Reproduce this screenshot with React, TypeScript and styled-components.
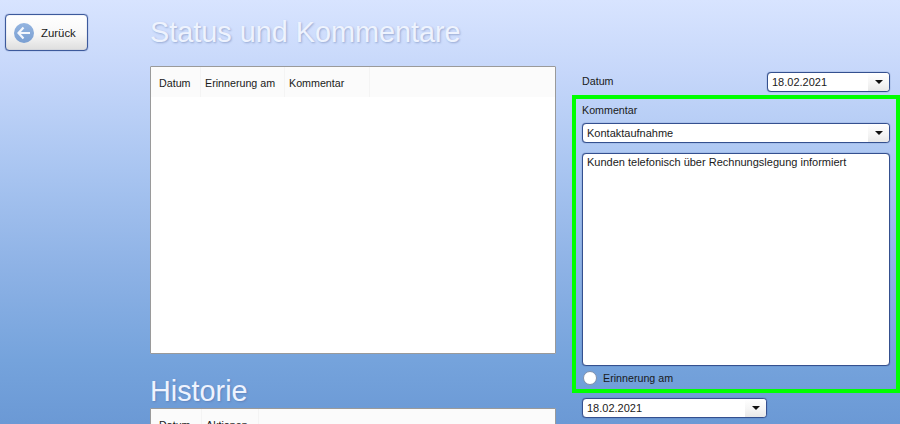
import styled, { createGlobalStyle } from "styled-components";

const GlobalStyle = createGlobalStyle`
  html, body {
    margin: 0;
    padding: 0;
  }
  body {
    font-family: "Liberation Sans", Arial, sans-serif;
    font-size: 10.7px;
    color: #1a1a1a;
  }
`;

const ScPage = styled.div`
  display: flex;
  width: 900px;
  height: 424px;
  overflow: hidden;
  background: linear-gradient(180deg, #d8e4ff 0%, #c6d7fa 17%, #a9c5f1 40%, #8fb3e6 62%, #75a3dc 85%, #6b99d5 100%);
`;

const ScSide = styled.aside`
  width: 150px;
  flex: none;
  padding: 14px 0 0 5px;
  box-sizing: border-box;
`;

const ScBackButton = styled.button`
  display: flex;
  align-items: center;
  gap: 7px;
  width: 83px;
  height: 37px;
  padding: 0 0 0 8px;
  box-sizing: border-box;
  border: 1px solid #3d5a9c;
  border-radius: 4px;
  box-shadow: 0 0 1px #3d5a9c, inset 0 0 1px #6f86bb;
  background: linear-gradient(180deg, #ffffff 0%, #f7f7f7 55%, #dedede 100%);
  font: 11.4px "Liberation Sans", Arial, sans-serif;
  color: #1a1a1a;
`;

const ScMiddle = styled.main`
  width: 406px;
  flex: none;
  display: flex;
  flex-direction: column;
`;

const ScHeading = styled.h1<{ $top: number }>`
  margin: ${(p) => p.$top}px 0 0;
  height: 32px;
  font: 28.8px/32px "Liberation Sans", Arial, sans-serif;
  color: #eef3fe;
  text-shadow: 1px 1px 2px rgba(70, 95, 150, 0.4);
  white-space: nowrap;
`;

const ScTable = styled.div<{ $height: number; $top: number }>`
  flex: none;
  height: ${(p) => p.$height}px;
  margin-top: ${(p) => p.$top}px;
  box-sizing: border-box;
  background: #fff;
  border: 1px solid #9a9a9a;
  border-radius: 1px;
`;

const ScTableHead = styled.div`
  display: flex;
  height: 30px;
  background: #fbfbfb;
`;

const ScHeadCell = styled.div<{ $width: number; $first?: boolean }>`
  width: ${(p) => p.$width}px;
  box-sizing: border-box;
  padding: 10px 0 0 ${(p) => (p.$first ? 8 : 4)}px;
  border-right: 1px solid #f4f4f4;
  white-space: nowrap;
`;

const ScRight = styled.section`
  width: 344px;
  flex: none;
  padding: 72px 0 0 16px;
  box-sizing: border-box;
  display: flex;
  flex-direction: column;
`;

const ScDateRow = styled.div`
  display: flex;
  justify-content: space-between;
  align-items: flex-start;
  height: 23px;
  padding: 0 10px;
`;

const ScLabel = styled.div`
  line-height: 18px;
`;

const ScHighlight = styled.div`
  display: flex;
  flex-direction: column;
  height: 298px;
  box-sizing: border-box;
  padding: 2px 6px 0;
  border: 4px solid #00ff00;
`;

const ScSelect = styled.div<{ $width: number; $top?: number }>`
  display: flex;
  align-items: center;
  justify-content: space-between;
  flex: none;
  width: ${(p) => p.$width}px;
  height: 20px;
  margin-top: ${(p) => p.$top ?? 0}px;
  padding-left: 4px;
  box-sizing: border-box;
  background: #fff;
  border: 1px solid #34508f;
  border-radius: 4px;
  box-shadow: 0 0 1px #34508f;
  overflow: hidden;
`;

const ScSelectValue = styled.span`
  font-size: 11px;
`;

const ScArrowBox = styled.div`
  display: flex;
  align-items: center;
  justify-content: center;
  width: 21px;
  height: 100%;
  background: linear-gradient(180deg, #ffffff 0%, #f4f4f4 60%, #e8e8e8 100%);

  &::after {
    content: "";
    border-left: 4px solid transparent;
    border-right: 4px solid transparent;
    border-top: 4px solid #111;
  }
`;

const ScTextBox = styled.div`
  flex: none;
  height: 213px;
  margin-top: 10px;
  padding: 2px 4px;
  box-sizing: border-box;
  font-size: 11px;
  background: #fff;
  border: 1px solid #34508f;
  border-radius: 4px;
  box-shadow: 0 0 1px #34508f;
`;

const ScRadioRow = styled.label`
  display: flex;
  align-items: center;
  gap: 6px;
  height: 14px;
  margin-top: 5px;
  padding-left: 1px;
`;

const ScRadio = styled.span`
  width: 14px;
  height: 14px;
  box-sizing: border-box;
  border: 1px solid #8090aa;
  border-radius: 50%;
  background: #fff;
`;

const ScBottomSelect = styled.div`
  padding: 5px 0 0 10px;
`;

const ArrowIcon = () => (
  <svg width="20" height="20" viewBox="0 0 20 20">
    <defs>
      <linearGradient id="ball" x1="0" y1="0" x2="0" y2="1">
        <stop offset="0" stopColor="#93b4e0" />
        <stop offset="1" stopColor="#7a9fd2" />
      </linearGradient>
    </defs>
    <circle cx="10" cy="10" r="10" fill="url(#ball)" />
    <path d="M9.5 4.5 4.5 10l5 5.5M5 10h11" fill="none" stroke="#f4f7fd" strokeWidth="2.2" />
  </svg>
);

const DateSelect = ({ value, width, top }: { value: string; width: number; top?: number }) => (
  <ScSelect $width={width} $top={top}>
    <ScSelectValue>{value}</ScSelectValue>
    <ScArrowBox />
  </ScSelect>
);

export default function App() {
  return (
    <ScPage>
      <GlobalStyle />
      <ScSide>
        <ScBackButton>
          <ArrowIcon />
          Zurück
        </ScBackButton>
      </ScSide>
      <ScMiddle>
        <ScHeading $top={16}>Status und Kommentare</ScHeading>
        <ScTable $height={288} $top={18}>
          <ScTableHead>
            <ScHeadCell $width={50} $first>Datum</ScHeadCell>
            <ScHeadCell $width={84}>Erinnerung am</ScHeadCell>
            <ScHeadCell $width={85}>Kommentar</ScHeadCell>
          </ScTableHead>
        </ScTable>
        <ScHeading $top={21}>Historie</ScHeading>
        <ScTable $height={60} $top={1}>
          <ScTableHead>
            <ScHeadCell $width={51} $first>Datum</ScHeadCell>
            <ScHeadCell $width={57}>Aktionen</ScHeadCell>
          </ScTableHead>
        </ScTable>
      </ScMiddle>
      <ScRight>
        <ScDateRow>
          <ScLabel>Datum</ScLabel>
          <DateSelect value="18.02.2021" width={123} />
        </ScDateRow>
        <ScHighlight>
          <ScLabel>Kommentar</ScLabel>
          <DateSelect value="Kontaktaufnahme" width={308} top={4} />
          <ScTextBox>Kunden telefonisch über Rechnungslegung informiert</ScTextBox>
          <ScRadioRow>
            <ScRadio />
            Erinnerung am
          </ScRadioRow>
        </ScHighlight>
        <ScBottomSelect>
          <DateSelect value="18.02.2021" width={185} />
        </ScBottomSelect>
      </ScRight>
    </ScPage>
  );
}
